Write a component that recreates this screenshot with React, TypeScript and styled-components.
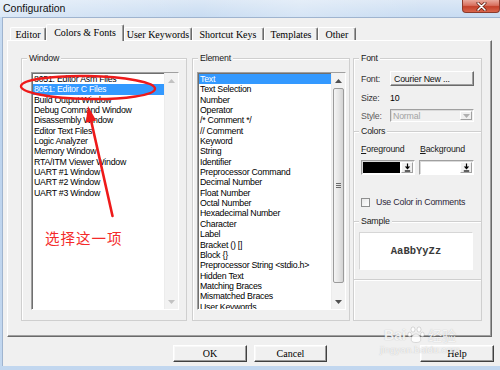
import React from 'react';
import styled, { createGlobalStyle } from 'styled-components';

const GlobalStyle = createGlobalStyle`
  html, body {
    margin: 0;
    padding: 0;
    background: #c3d8f0;
  }
  body {
    width: 500px;
    height: 370px;
    overflow: hidden;
    font-family: "Liberation Sans", Arial, sans-serif;
  }
`;

const Frame = styled.div`
  position: relative;
  width: 500px;
  height: 370px;
  display: flex;
  flex-direction: column;
  background: linear-gradient(to bottom, #dce8f6 0, #c8dcf2 17px, #bcd3ee 120px, #c2d7ef 100%);
  overflow: hidden;
`;

const TitleBar = styled.div`
  height: 17px;
  display: flex;
  align-items: flex-start;
  padding-left: 3px;
  background: linear-gradient(100deg, rgba(255,255,255,0.35) 0, rgba(255,255,255,0) 40%, rgba(255,255,255,0.25) 60%, rgba(255,255,255,0) 85%);
`;

const Title = styled.div`
  font-size: 10.5px;
  line-height: 16px;
  color: #111;
`;

const CloseButton = styled.div`
  margin-left: auto;
  width: 38px;
  height: 13px;
  box-sizing: border-box;
  border: 1px solid #8b3a2b;
  border-top: none;
  border-radius: 0 0 4px 4px;
  background: linear-gradient(to bottom, #e9a99c 0, #d8705e 45%, #c4412a 55%, #d9654c 100%);
  display: flex;
  align-items: center;
  justify-content: center;
`;

const Client = styled.div`
  flex: 1;
  margin: 0 0 4px 2px;
  border-left: 1px solid #9fb4cf;
  border-top: 1px solid #9fb4cf;
  background: #f0f0f0;
  padding-left: 4px;
  display: flex;
  flex-direction: column;
`;

const TabStrip = styled.div`
  height: 22px;
  display: flex;
  align-items: flex-end;
  padding-left: 3px;
`;

const Tab = styled.div<{ $w: number; $active?: boolean }>`
  position: relative;
  z-index: ${p => (p.$active ? 1 : 0)};
  box-sizing: border-box;
  width: ${p => p.$w}px;
  height: ${p => (p.$active ? 17 : 13)}px;
  margin-bottom: ${p => (p.$active ? -1 : 0)}px;
  border-top: 1px solid #fff;
  border-left: 1px solid #fff;
  border-right: 1px solid #6a6a6a;
  box-shadow: inset -1px 0 0 #a0a0a0;
  border-radius: 2px 2px 0 0;
  background: #f0f0f0;
  display: flex;
  align-items: center;
  justify-content: center;
  padding-bottom: ${p => (p.$active ? 2 : 0)}px;
  font-family: "Liberation Serif", "Times New Roman", serif;
  font-size: 10px;
  color: #000;
  white-space: nowrap;
`;

const Panel = styled.div`
  box-sizing: border-box;
  width: 485px;
  height: 297px;
  border: 1px solid;
  border-color: #fff #6a6a6a #6a6a6a #fff;
  box-shadow: inset -1px -1px 0 #a0a0a0;
  padding: 17px 0 0 13px;
  display: grid;
  grid-template-columns: 166px 158px 127px;
  column-gap: 5px;
  align-items: start;
`;

const Group = styled.div<{ $h: number; $stack?: boolean }>`
  box-sizing: border-box;
  height: ${p => p.$h}px;
  margin-top: ${p => (p.$stack ? -1 : 0)}px;
  border: 1px solid #cfcfcf;
  box-shadow: inset 1px 1px 0 #fff;
  display: flex;
  flex-direction: column;
`;

const Caption = styled.div`
  position: relative;
  align-self: flex-start;
  margin: -6px 0 0 5px;
  padding: 0 2px;
  background: #f0f0f0;
  font-size: 8.8px;
  line-height: 11px;
  letter-spacing: -0.2px;
  color: #1a1a1a;
`;

const RightColumn = styled.div`
  display: flex;
  flex-direction: column;
  margin-left: -2px;
`;

const ListBox = styled.div<{ $left: number; $w: number }>`
  box-sizing: border-box;
  margin: 8px 0 0 ${p => p.$left}px;
  width: ${p => p.$w}px;
  height: 238px;
  border: 1px solid;
  border-color: #a0a0a0 #fff #fff #a0a0a0;
  box-shadow: inset 1px 1px 0 #6f6f6f;
  background: #fff;
  display: flex;
  overflow: hidden;
`;

const Items = styled.div`
  flex: 1;
  padding: 1px 0 0 1px;
  overflow: hidden;
`;

const Row = styled.div<{ $selected?: boolean }>`
  height: 10.35px;
  line-height: 10.35px;
  padding-left: 1px;
  white-space: nowrap;
  font-size: 8.8px;
  letter-spacing: -0.25px;
  background: ${p => (p.$selected ? '#3399ff' : 'transparent')};
  color: ${p => (p.$selected ? '#fff' : '#000')};
`;

const ScrollBar = styled.div`
  width: 13px;
  display: flex;
  flex-direction: column;
  background: #f2f2f2;
  border-left: 1px solid #ececec;
`;

const ScrollArrow = styled.div`
  height: 15px;
  display: flex;
  align-items: center;
  justify-content: center;
`;

const Track = styled.div`
  flex: 1;
  display: flex;
  flex-direction: column;
`;

const Thumb = styled.div`
  box-sizing: border-box;
  height: 195px;
  margin: 0 1px;
  border: 1px solid #9b9b9b;
  border-radius: 2px;
  background: linear-gradient(to right, #f4f4f4 0, #e6e6e6 50%, #d4d4d4 100%);
  display: flex;
  align-items: center;
  justify-content: center;
`;

const Grip = styled.div`
  width: 5px;
  height: 5px;
  background: repeating-linear-gradient(to bottom, #6b6b6b 0, #6b6b6b 1px, transparent 1px, transparent 2px);
`;

const FieldRow = styled.div<{ $top: number; $h: number }>`
  display: flex;
  align-items: center;
  margin-top: ${p => p.$top}px;
  height: ${p => p.$h}px;
  padding-left: 7px;
  font-size: 8.8px;
  letter-spacing: -0.2px;
`;

const FieldLabel = styled.span<{ $muted?: boolean }>`
  width: 29px;
  color: ${p => (p.$muted ? '#5c5c5c' : '#333')};
`;

const PushButton = styled.div<{ $w: number }>`
  box-sizing: border-box;
  width: ${p => p.$w}px;
  height: 100%;
  border: 1px solid;
  border-color: #fff #6a6a6a #6a6a6a #fff;
  box-shadow: inset -1px -1px 0 #a0a0a0;
  background: #f0f0f0;
  display: flex;
  align-items: center;
`;

const FontButton = styled(PushButton)`
  padding-left: 3px;
  color: #111;
`;

const Combo = styled.div<{ $w: number; $disabled?: boolean }>`
  box-sizing: border-box;
  width: ${p => p.$w}px;
  height: 100%;
  border: 1px solid;
  border-color: #a0a0a0 #fff #fff #a0a0a0;
  box-shadow: inset 1px 1px 0 #dadada;
  background: ${p => (p.$disabled ? '#f0f0f0' : '#fff')};
  display: flex;
  align-items: stretch;
  padding: 1px;
`;

const ComboText = styled.span`
  flex: 1;
  display: flex;
  align-items: center;
  padding-left: 1px;
  color: #a3a3a3;
`;

const DropButton = styled.div`
  box-sizing: border-box;
  width: 12px;
  border: 1px solid;
  border-color: #fff #a0a0a0 #a0a0a0 #fff;
  background: #f0f0f0;
  display: flex;
  align-items: center;
  justify-content: center;
`;

const Swatch = styled.div<{ $color: string }>`
  flex: 1;
  margin-right: 1px;
  background: ${p => p.$color};
`;

const ColorLabel = styled.span<{ $w: number }>`
  width: ${p => p.$w}px;
  color: #1a1a1a;
  u {
    text-decoration: underline;
    text-underline-offset: 1px;
  }
`;

const ComboGap = styled.div`
  width: 4px;
`;

const CheckBox = styled.div`
  box-sizing: border-box;
  width: 9px;
  height: 9px;
  border: 1px solid #8e8f8f;
  background: linear-gradient(135deg, #e8e8e8, #fff);
  margin-right: 6px;
`;

const CheckLabel = styled.span`
  color: #2b2538;
`;

const SampleBox = styled.div`
  box-sizing: border-box;
  margin: 5px 0 0 5px;
  width: 114px;
  height: 38px;
  background: #fff;
  border: 1px solid;
  border-color: #d6d6d6 #fff #fff #d6d6d6;
  display: flex;
  align-items: center;
  justify-content: center;
  font-family: "Liberation Mono", "Courier New", monospace;
  font-size: 10.5px;
  font-weight: bold;
  color: #3a3a3a;
`;

const ButtonRow = styled.div`
  display: flex;
  height: 17px;
  margin-top: 8px;
`;

const DialogButton = styled(PushButton)<{ $gap?: string }>`
  margin-left: ${p => p.$gap || '0'};
  justify-content: center;
  border-color: #fff #404040 #404040 #fff;
  box-shadow: inset -1px -1px 0 #9a9a9a, inset 1px 1px 0 #f8f8f8;
  font-family: "Liberation Serif", "Times New Roman", serif;
  font-size: 10px;
  color: #000;
`;

const Overlay = styled.svg`
  position: absolute;
  left: 0;
  top: 0;
  pointer-events: none;
`;

const Note = styled.div`
  position: absolute;
  left: 45px;
  top: 227px;
  font-family: "Noto Sans CJK SC", sans-serif;
  font-size: 14.5px;
  letter-spacing: 1px;
  color: #f42a2a;
`;

const Watermark = styled.div`
  position: absolute;
  left: 380px;
  top: 326px;
  display: flex;
  flex-direction: column;
  align-items: center;
  color: rgba(255, 255, 255, 0.85);
  text-shadow: 0 0 1px rgba(120, 120, 120, 0.5);
  pointer-events: none;
`;

const WatermarkTop = styled.div`
  display: flex;
  align-items: center;
  gap: 1px;
  font-size: 14px;
  font-weight: bold;
  line-height: 17px;
`;

const WatermarkCn = styled.span`
  font-family: "Noto Sans CJK SC", sans-serif;
  font-size: 14px;
  font-weight: normal;
  margin-left: 2px;
`;

const WatermarkUrl = styled.div`
  font-size: 9.5px;
  line-height: 11px;
  letter-spacing: 0.2px;
`;

const Triangle = ({ up, color }: { up?: boolean; color: string }) => (
  <svg width="7" height="4" viewBox="0 0 7 4">
    <path d={up ? 'M0 4 L3.5 0 L7 4 Z' : 'M0 0 L3.5 4 L7 0 Z'} fill={color} />
  </svg>
);

const DownBarArrow = () => (
  <svg width="7" height="9" viewBox="0 0 7 9">
    <path d="M3.5 0.5 V4" stroke="#000" strokeWidth="1.2" />
    <path d="M0.8 3.5 H6.2 L3.5 6.6 Z" fill="#000" />
    <path d="M0.8 8 H6.2" stroke="#000" strokeWidth="1.2" />
  </svg>
);

const CloseGlyph = () => (
  <svg width="11" height="9" viewBox="0 0 11 9">
    <path d="M2 1 L9 8 M9 1 L2 8" stroke="#5a1a10" strokeWidth="3" strokeLinecap="round" />
    <path d="M2 1 L9 8 M9 1 L2 8" stroke="#fff" strokeWidth="1.6" strokeLinecap="round" />
  </svg>
);

const paw = () => (
  <svg width="18" height="18" viewBox="0 0 18 18">
    <g fill="rgba(255,255,255,0.85)" stroke="rgba(130,130,130,0.45)" strokeWidth="0.6">
      <ellipse cx="6" cy="3.5" rx="2" ry="2.6" />
      <ellipse cx="12" cy="3.5" rx="2" ry="2.6" />
      <ellipse cx="2.6" cy="8.5" rx="1.8" ry="2.3" />
      <ellipse cx="15.4" cy="8.5" rx="1.8" ry="2.3" />
      <path d="M9 8 C5.5 8 3.5 12.5 4.5 15 C5.5 17 12.5 17 13.5 15 C14.5 12.5 12.5 8 9 8 Z" />
    </g>
  </svg>
);

const tabs = [
  { label: 'Editor', w: 36 },
  { label: 'Colors & Fonts', w: 78, active: true },
  { label: 'User Keywords', w: 68 },
  { label: 'Shortcut Keys', w: 72 },
  { label: 'Templates', w: 54 },
  { label: 'Other', w: 38 },
];

const windows = [
  '8051: Editor Asm Files',
  '8051: Editor C Files',
  'Build Output Window',
  'Debug Command Window',
  'Disassembly Window',
  'Editor Text Files',
  'Logic Analyzer',
  'Memory Window',
  'RTA/ITM Viewer Window',
  'UART #1 Window',
  'UART #2 Window',
  'UART #3 Window',
];

const elements = [
  'Text',
  'Text Selection',
  'Number',
  'Operator',
  '/* Comment */',
  '// Comment',
  'Keyword',
  'String',
  'Identifier',
  'Preprocessor Command',
  'Decimal Number',
  'Float Number',
  'Octal Number',
  'Hexadecimal Number',
  'Character',
  'Label',
  'Bracket () []',
  'Block {}',
  'Preprocessor String <stdio.h>',
  'Hidden Text',
  'Matching Braces',
  'Mismatched Braces',
  'User Keywords',
];

export default function App() {
  const Paw = paw;
  return (
    <>
      <GlobalStyle />
      <Frame>
        <TitleBar>
          <Title>Configuration</Title>
          <CloseButton>
            <CloseGlyph />
          </CloseButton>
        </TitleBar>

        <Client>
          <TabStrip>
            {tabs.map(t => (
              <Tab key={t.label} $w={t.w} $active={t.active}>
                {t.label}
              </Tab>
            ))}
          </TabStrip>

          <Panel>
            <Group $h={263}>
              <Caption>Window</Caption>
              <ListBox $left={9} $w={148}>
                <Items>
                  {windows.map((w, i) => (
                    <Row key={w} $selected={i === 1}>
                      {w}
                    </Row>
                  ))}
                </Items>
                <ScrollBar>
                  <ScrollArrow>
                    <Triangle up color="#c2c2c2" />
                  </ScrollArrow>
                  <Track />
                  <ScrollArrow>
                    <Triangle color="#c2c2c2" />
                  </ScrollArrow>
                </ScrollBar>
              </ListBox>
            </Group>

            <Group $h={263}>
              <Caption>Element</Caption>
              <ListBox $left={4} $w={149}>
                <Items>
                  {elements.map((e, i) => (
                    <Row key={e} $selected={i === 0}>
                      {e}
                    </Row>
                  ))}
                </Items>
                <ScrollBar>
                  <ScrollArrow>
                    <Triangle up color="#505050" />
                  </ScrollArrow>
                  <Track>
                    <Thumb>
                      <Grip />
                    </Thumb>
                  </Track>
                  <ScrollArrow>
                    <Triangle color="#505050" />
                  </ScrollArrow>
                </ScrollBar>
              </ListBox>
            </Group>

            <RightColumn>
              <Group $h={74}>
                <Caption>Font</Caption>
                <FieldRow $top={7} $h={15}>
                  <FieldLabel>Font:</FieldLabel>
                  <FontButton $w={84}>Courier New ...</FontButton>
                </FieldRow>
                <FieldRow $top={6} $h={12}>
                  <FieldLabel>Size:</FieldLabel>
                  <span>10</span>
                </FieldRow>
                <FieldRow $top={5} $h={13}>
                  <FieldLabel $muted>Style:</FieldLabel>
                  <Combo $w={84} $disabled>
                    <ComboText>Normal</ComboText>
                    <DropButton>
                      <Triangle color="#b0b0b0" />
                    </DropButton>
                  </Combo>
                </FieldRow>
              </Group>

              <Group $h={91} $stack>
                <Caption>Colors</Caption>
                <FieldRow $top={6} $h={12}>
                  <ColorLabel $w={59}>
                    <u>F</u>oreground
                  </ColorLabel>
                  <ColorLabel $w={60}>
                    <u>B</u>ackground
                  </ColorLabel>
                </FieldRow>
                <FieldRow $top={5} $h={15}>
                  <Combo $w={54}>
                    <Swatch $color="#000" />
                    <DropButton>
                      <DownBarArrow />
                    </DropButton>
                  </Combo>
                  <ComboGap />
                  <Combo $w={55}>
                    <Swatch $color="#fff" />
                    <DropButton>
                      <DownBarArrow />
                    </DropButton>
                  </Combo>
                </FieldRow>
                <FieldRow $top={21} $h={12}>
                  <CheckBox />
                  <CheckLabel>Use Color in Comments</CheckLabel>
                </FieldRow>
              </Group>

              <Group $h={59} $stack>
                <Caption>Sample</Caption>
                <SampleBox>AaBbYyZz</SampleBox>
              </Group>

              <Group $h={42} $stack />
            </RightColumn>
          </Panel>

          <ButtonRow>
            <DialogButton $w={74} $gap="166px">OK</DialogButton>
            <DialogButton $w={73} $gap="7px">Cancel</DialogButton>
            <DialogButton $w={74} $gap="93px">Help</DialogButton>
          </ButtonRow>
        </Client>

        <Overlay width="500" height="370" viewBox="0 0 500 370">
          <ellipse
            cx="88"
            cy="87.5"
            rx="67"
            ry="11.5"
            transform="rotate(1 88 87.5)"
            fill="none"
            stroke="#ee1a1a"
            strokeWidth="2.4"
          />
          <path d="M112.5 216 L90.5 118" stroke="#ee1a1a" strokeWidth="2.6" strokeLinecap="round" />
          <path d="M88 106 L96.2 120.5 L85.8 122.8 Z" fill="#ee1a1a" />
        </Overlay>
        <Note>选择这一项</Note>

        <Watermark>
          <WatermarkTop>
            <span>Bai</span>
            <Paw />
            <WatermarkCn>经验</WatermarkCn>
          </WatermarkTop>
          <WatermarkUrl>jingyan.baidu.com</WatermarkUrl>
        </Watermark>
      </Frame>
    </>
  );
}
